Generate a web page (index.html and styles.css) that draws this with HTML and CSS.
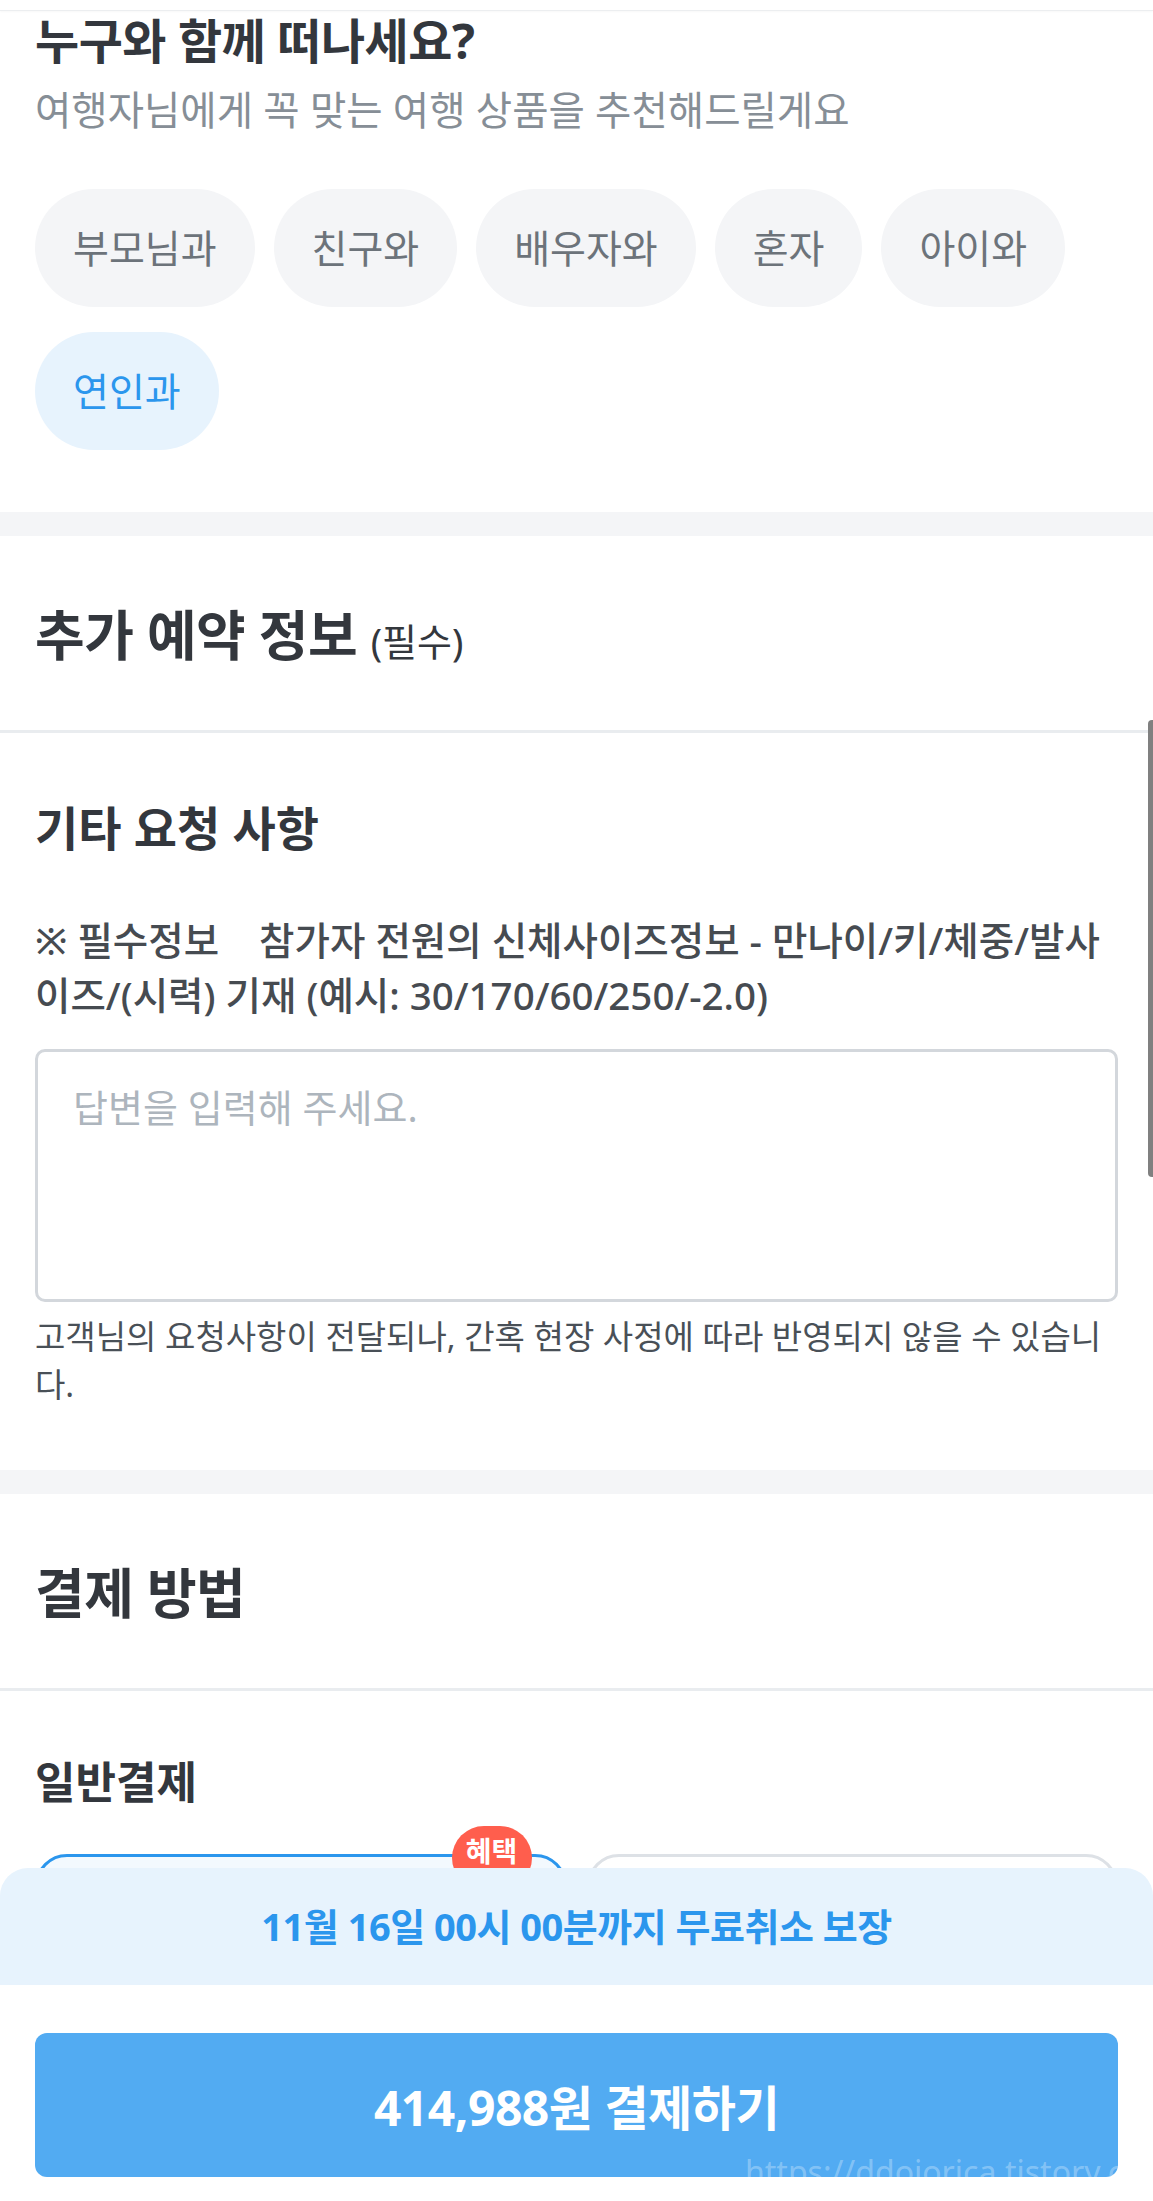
FILE: index.html
```html
<!DOCTYPE html>
<html lang="ko">
<head>
<meta charset="utf-8">
<title>예약</title>
<link rel="stylesheet" href="styles.css">
</head>
<body>
<div class="topbar"></div>

<section class="companion">
  <h2 class="q-title">누구와 함께 떠나세요?</h2>
  <p class="q-sub">여행자님에게 꼭 맞는 여행 상품을 추천해드릴게요</p>
  <div class="chips">
    <span class="chip">부모님과</span>
    <span class="chip">친구와</span>
    <span class="chip">배우자와</span>
    <span class="chip">혼자</span>
    <span class="chip">아이와</span>
    <span class="chip chip-on">연인과</span>
  </div>
</section>

<div class="band"></div>

<header class="sec-head">
  <h2 class="sec-title">추가 예약 정보 <span class="sec-req">(필수)</span></h2>
</header>

<section class="request">
  <h3 class="req-title">기타 요청 사항</h3>
  <p class="req-info">※ 필수정보&nbsp;&nbsp;&nbsp; 참가자 전원의 신체사이즈정보 - 만나이/키/체중/발사이즈/(시력) 기재 (예시: 30/170/60/250/-2.0)</p>
  <div class="answer"><span class="placeholder">답변을 입력해 주세요.</span></div>
  <p class="req-note">고객님의 요청사항이 전달되나, 간혹 현장 사정에 따라 반영되지 않을 수 있습니다.</p>
</section>

<div class="band"></div>

<header class="sec-head">
  <h2 class="sec-title">결제 방법</h2>
</header>

<section class="payment">
  <h3 class="pay-title">일반결제</h3>
  <div class="pay-cards">
    <div class="pay-card pay-card-on"><span class="badge">혜택</span></div>
    <div class="pay-card"></div>
  </div>
</section>

<div class="scroll-thumb"></div>

<footer class="bottom">
  <div class="notice">11월 16일 00시 00분까지 무료취소 보장</div>
  <div class="pay-area">
    <button class="pay-btn">414,988원 결제하기<span class="watermark">https://ddojorica.tistory.com</span></button>
  </div>
</footer>
</body>
</html>
```

FILE: styles.css
```css
html, body {
  margin: 0;
  padding: 0;
  background: #ffffff;
  overflow: hidden;
}
body {
  width: 1153px;
  height: 2201px;
  font-family: "Noto Sans", "Noto Sans CJK KR", sans-serif;
  color: #343a40;
}
h2, h3, p { margin: 0; }

.topbar {
  height: 10px;
  border-bottom: 1px solid #eceef0;
  box-shadow: 0 1px 2px rgba(0,0,0,0.03);
}

.companion {
  padding: 0 35px 62px;
}
.q-title {
  font-size: 48px;
  line-height: 60px;
  font-weight: 700;
  color: #33373d;
  letter-spacing: -0.5px;
}
.q-sub {
  margin-top: 11px;
  font-size: 39.5px;
  line-height: 56px;
  color: #868e96;
}
.chips {
  margin-top: 51px;
  display: flex;
  flex-wrap: wrap;
  gap: 25px 19px;
}
.chip {
  height: 118px;
  line-height: 118px;
  padding: 0 38px;
  border-radius: 60px;
  background: #f4f5f7;
  color: #6c737a;
  font-size: 39px;
}
.chip-on {
  background: #e7f3fd;
  color: #2b96ed;
}

.band {
  height: 24px;
  background: #f4f5f7;
}

.sec-head {
  padding: 64px 35px 60px;
  border-bottom: 3px solid #e9ecef;
}
.sec-title {
  font-size: 54px;
  line-height: 70px;
  font-weight: 700;
  color: #33373d;
  letter-spacing: -0.5px;
}
.sec-req {
  font-size: 38px;
  line-height: 1;
  font-weight: 400;
  letter-spacing: 0;
}

.request {
  padding: 64px 35px 61px;
}
.req-title {
  font-size: 47px;
  line-height: 62px;
  font-weight: 700;
  color: #33373d;
}
.req-info {
  margin-top: 54px;
  font-size: 38.5px;
  line-height: 55px;
  font-weight: 500;
  color: #464b51;
}
.answer {
  margin-top: 26px;
  height: 253px;
  box-sizing: border-box;
  border: 3px solid #d3d7dc;
  border-radius: 10px;
  padding: 28px 35px;
}
.placeholder {
  font-size: 38px;
  line-height: 54px;
  color: #adb5bd;
}
.req-note {
  margin-top: 11px;
  font-size: 33px;
  line-height: 48px;
  color: #495057;
}

.payment {
  padding: 61px 35px 0;
}
.pay-title {
  font-size: 44px;
  line-height: 60px;
  font-weight: 700;
  color: #33373d;
}
.pay-cards {
  margin-top: 42px;
  display: grid;
  grid-template-columns: 1fr 1fr;
  gap: 20px;
}
.pay-card {
  position: relative;
  height: 170px;
  border: 3px solid #dde1e6;
  border-radius: 32px;
  background: #ffffff;
}
.pay-card-on {
  border-color: #2b96ed;
  background: #f3f9fe;
}
.badge {
  position: absolute;
  top: -31px;
  right: 32px;
  width: 80px;
  height: 64px;
  border-radius: 32px;
  background: #ff5e4d;
  color: #ffffff;
  font-family: "Noto Sans CJK KR", sans-serif;
  font-size: 28px;
  font-weight: 700;
  line-height: 48px;
  text-align: center;
}

.scroll-thumb {
  position: fixed;
  top: 720px;
  right: 0;
  width: 5px;
  height: 457px;
  background: #808080;
  border-radius: 4px 0 0 4px;
}

.bottom {
  position: fixed;
  left: 0;
  right: 0;
  bottom: 0;
}
.notice {
  height: 117px;
  line-height: 117px;
  background: #e7f3fd;
  border-radius: 28px 28px 0 0;
  text-align: center;
  color: #2b96ed;
  font-size: 38px;
  font-weight: 700;
  letter-spacing: -0.5px;
}
.pay-area {
  background: #ffffff;
  padding: 48px 35px 24px;
}
.pay-btn {
  position: relative;
  overflow: hidden;
  display: block;
  width: 100%;
  height: 144px;
  border: 0;
  border-radius: 12px;
  background: #52abf2;
  color: #ffffff;
  font-family: "Noto Sans", "Noto Sans CJK KR", sans-serif;
  font-size: 48px;
  font-weight: 700;
  letter-spacing: -0.5px;
  padding: 0;
}
.watermark {
  position: absolute;
  left: 710px;
  top: 123px;
  font-family: "Noto Sans", sans-serif;
  font-size: 32px;
  line-height: 32px;
  font-weight: 400;
  letter-spacing: 0;
  color: rgba(255,255,255,0.3);
  white-space: nowrap;
}
```
